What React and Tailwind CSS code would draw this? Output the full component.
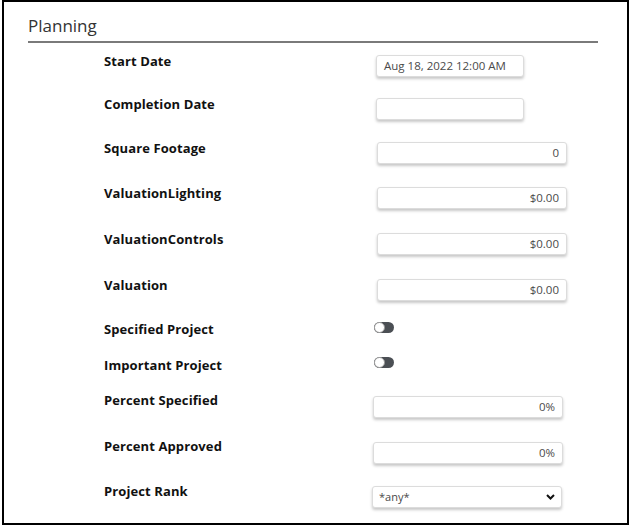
const font = { fontFamily: '"Open Sans", "DejaVu Sans", sans-serif' };

const Field = ({ width = "w-[190px]", offset, value = "", align = "text-right" }) => (
  <div
    className={`${width} ${offset} h-[22px] border border-[#dcdcdc] rounded-[3px] bg-white shadow-[0_2px_3px_rgba(0,0,0,0.22)] px-[7px] flex items-center ${align === "text-right" ? "justify-end" : "justify-start"} text-[11.5px] text-[#4a4a4a]`}
  >
    {value}
  </div>
);

const Toggle = ({ offset }) => (
  <div className={`${offset} w-[20px] h-[11px] rounded-full bg-[#4b4f54] relative`}>
    <div className="absolute left-0 top-0 w-[11px] h-[11px] rounded-full bg-white border border-[#9a9a9a]" />
  </div>
);

const Row = ({ label, h, labelTop = "mt-[-2px]", children }) => (
  <div className={`flex items-start ${h}`}>
    <div className={`w-[268px] pl-[76px] text-[13px] font-bold text-[#111] leading-[16px] tracking-[0.1px] ${labelTop}`}>{label}</div>
    {children}
  </div>
);

export default function App() {
  return (
    <div className="pl-[2px] bg-white" style={font}>
      <div className="w-[627px] h-[525px] border-2 border-black px-[24px] pt-[14px]">
        <div className="w-[570px] border-b-2 border-[#7a7a7a] pb-[5px] text-[17px] text-[#333] leading-[20px]">Planning</div>
        <div className="mt-[12px] flex flex-col">
          <Row label="Start Date" h="h-[43px]">
            <Field width="w-[148px]" offset="ml-[80px]" value="Aug 18, 2022 12:00 AM" align="text-left" />
          </Row>
          <Row label="Completion Date" h="h-[44px]">
            <Field width="w-[148px]" offset="ml-[80px]" />
          </Row>
          <Row label="Square Footage" h="h-[45px]">
            <Field offset="ml-[81px]" value="0" />
          </Row>
          <Row label="ValuationLighting" h="h-[46px]">
            <Field offset="ml-[81px]" value="$0.00" />
          </Row>
          <Row label="ValuationControls" h="h-[46px]">
            <Field offset="ml-[81px]" value="$0.00" />
          </Row>
          <Row label="Valuation" h="h-[43px]">
            <Field offset="ml-[81px]" value="$0.00" />
          </Row>
          <Row label="Specified Project" h="h-[35px]" labelTop="mt-[-1px]">
            <Toggle offset="ml-[78px]" />
          </Row>
          <Row label="Important Project" h="h-[39px]" labelTop="mt-[0px]">
            <Toggle offset="ml-[78px]" />
          </Row>
          <Row label="Percent Specified" h="h-[46px]" labelTop="mt-[-4px]">
            <Field offset="ml-[77px]" value="0%" />
          </Row>
          <Row label="Percent Approved" h="h-[44px]" labelTop="mt-[-4px]">
            <Field offset="ml-[77px]" value="0%" />
          </Row>
          <Row label="Project Rank" h="h-[24px]" labelTop="mt-[-3px]">
            <div className="ml-[76px] w-[190px] h-[22px] border border-[#dcdcdc] rounded-[3px] bg-white shadow-[0_2px_3px_rgba(0,0,0,0.22)] pl-[6px] pr-[6px] flex items-center justify-between text-[11px] text-[#4a4a4a]">
              <span>*any*</span>
              <svg width="9" height="6" viewBox="0 0 9 6" fill="none">
                <path d="M1 1l3.5 3.5L8 1" stroke="#111" strokeWidth="2" />
              </svg>
            </div>
          </Row>
        </div>
      </div>
    </div>
  );
}
